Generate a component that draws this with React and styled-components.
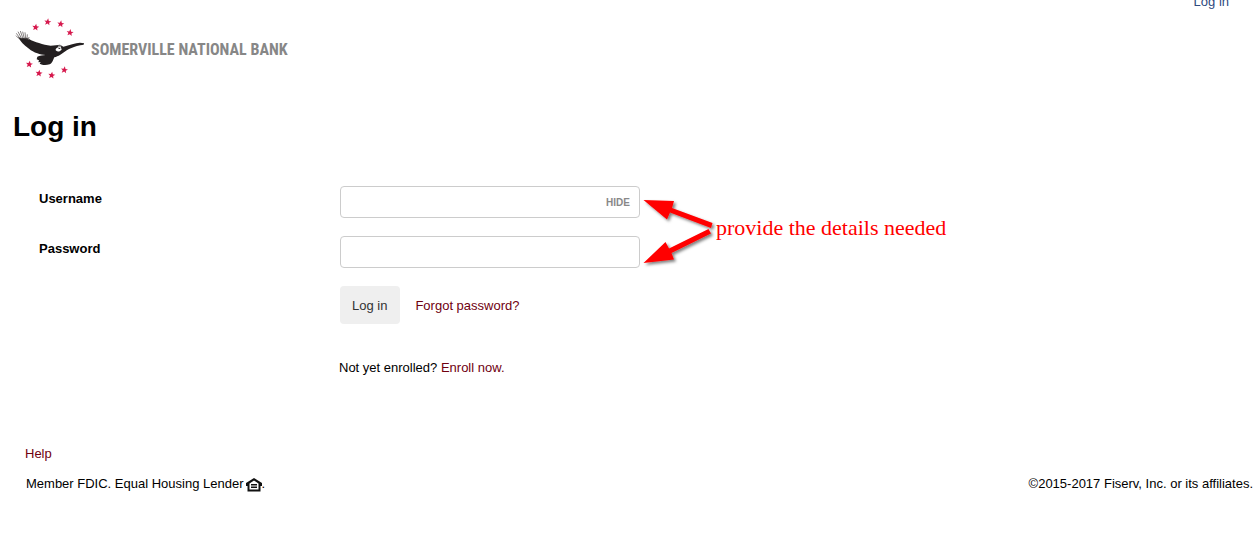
import { useState } from "react";
import styled, { createGlobalStyle } from "styled-components";

const GlobalStyle = createGlobalStyle`
  * {
    box-sizing: border-box;
  }

  body {
    margin: 0;
    background-color: #fff;
    color: #000;
    font-family: "Liberation Sans", Arial, sans-serif;
    font-size: 13px;
    line-height: 16px;
  }
`;

const Page = styled.div`
  width: 100%;
`;

const TopBar = styled.nav`
  display: flex;
  justify-content: flex-end;
  align-items: flex-end;
  height: 10px;
  padding-right: 27px;
`;

const StyledLink = styled.a`
  color: ${(props) => props.$color || "#700010"};
  text-decoration: none;
`;

const Brand = styled.header`
  display: flex;
  align-items: center;
  gap: 1px;
  padding: 2px 10px 0;
`;

const BrandName = styled.span`
  padding-top: 4px;
  color: #878787;
  font-family: "Liberation Sans Narrow", "Roboto Condensed", "Liberation Sans", sans-serif;
  font-size: 16px;
  font-weight: bold;
  line-height: 24px;
  white-space: nowrap;
`;

const Title = styled.h1`
  margin: 27px 13px 43px;
  font-size: 28px;
  font-weight: bold;
  line-height: 32px;
`;

const LoginForm = styled.form`
  position: relative;
  display: flex;
  flex-direction: column;
  gap: 18px;
  padding-left: 39px;
`;

const Row = styled.div`
  display: grid;
  grid-template-columns: 301px 300px;
`;

const Label = styled.label`
  font-weight: bold;
  line-height: 26px;
`;

const Field = styled.div`
  display: flex;
  align-items: center;
  height: 32px;
  border: 1px solid #ccc;
  border-radius: 4px;
`;

const Input = styled.input`
  flex: 1;
  min-width: 0;
  height: 100%;
  padding: 0 9px;
  border: none;
  outline: none;
  background: transparent;
  font: inherit;
`;

const HideButton = styled.button`
  padding: 0 9px;
  border: none;
  background: transparent;
  color: #888;
  font-family: inherit;
  font-size: 10px;
  font-weight: bold;
`;

const Actions = styled.div`
  grid-column: 2;
  display: flex;
  align-items: center;
  gap: 15px;
`;

const SubmitButton = styled.button`
  height: 38px;
  padding: 2px 13px 0 12px;
  border: none;
  border-radius: 4px;
  background-color: #efefef;
  color: #333;
  font: inherit;
`;

const ForgotLink = styled(StyledLink)`
  padding-top: 2px;
`;

const Enroll = styled.p`
  margin: 36px 0 0 339px;
`;

const Annotation = styled.div`
  position: absolute;
  top: 8px;
  left: 640px;
  display: flex;
  color: #f00;
  font-family: "Liberation Serif", "Times New Roman", serif;
  font-size: 22px;
  line-height: 26px;
  white-space: nowrap;
  pointer-events: none;
`;

const AnnotationText = styled.span`
  padding-top: 21px;
`;

const FooterContainer = styled.footer`
  margin-top: 70px;
  padding: 0 3px 32px 25px;
`;

const FooterRow = styled.div`
  display: flex;
  justify-content: space-between;
  margin-top: 14px;
  padding-left: 1px;
`;

const Lender = styled.span`
  display: flex;
  align-items: center;
`;

const HouseSvg = styled.svg`
  margin: 2px 0 0 2px;
`;

const STARS = [
  [77, 46],
  [113, 30],
  [152, 36],
  [180, 62],
  [58, 157],
  [87, 184],
  [125, 190],
  [163, 174],
];

function Star({ x, y }) {
  return (
    <path
      transform={`translate(${x} ${y}) rotate(8)`}
      d="M0-11 3-3.4 10.5-3.2 4.6 1.6 6.6 9 0 4.8-6.6 9-4.6 1.6-10.5-3.2-3-3.4Z"
      fill="#d6194d"
    />
  );
}

function EagleLogo() {
  return (
    <svg width="80" height="72" viewBox="0 0 240 216" aria-hidden="true">
      {STARS.map(([x, y]) => (
        <Star key={`${x}-${y}`} x={x} y={y} />
      ))}
      <path
        d="M24 75L34 78L50 77L56 80C66 86 76 90 87 93C99 97 110 100 122 101L138 100L150 98L160 104C178 99 196 93 210 92L222 94C224 98 219 100 211 100C196 103 187 107 177 111C168 116 160 123 151 128C144 132 139 134 133 136C129 143 128 153 119 157C109 160 97 160 89 155L92 150L85 151L87 145L80 142L82 134C89 130 98 130 107 129C98 129 90 127 82 124C72 120 64 116 57 110C47 103 37 96 24 75Z"
        fill="#231f20"
      />
      <path
        d="M27 80L18 71M30 79L19 64M35 80L24 59M39 80L31 57M43 80L38 59M47 80L45 61M51 82L52 67M55 84L57 75"
        stroke="#6d6867"
        strokeWidth="2.500"
        fill="none"
      />
      <path d="M137 112C139 106 147 103 153 106L155 113L149 118C142 120 136 117 137 112Z" fill="#fff" />
      <path d="M143 101L152 100L154 104L145 105Z" fill="#aaa" />
      <path d="M146 107L152 108L149 111L145 110Z" fill="#231f20" />
    </svg>
  );
}

function Arrows() {
  return (
    <svg width="76" height="76" viewBox="640 194 76 76" aria-hidden="true">
      <defs>
        <filter id="arrowShadow" x="-20%" y="-20%" width="150%" height="150%">
          <feDropShadow dx="2" dy="2" stdDeviation="1.5" floodColor="#000" floodOpacity="0.5" />
        </filter>
      </defs>
      <g fill="#f00" filter="url(#arrowShadow)">
        <path d="M643.5 200L674 201L672 208L712.500 223L711 228L670 212.500L667 219.500Z" />
        <path d="M643.500 263L665.500 242L669 248.500L708.500 229L711 233.500L671.500 253L674 259.500Z" />
      </g>
    </svg>
  );
}

function HouseIcon() {
  return (
    <HouseSvg width="16" height="14" viewBox="0 0 16 14" role="img" aria-label="Equal Housing Lender">
      <path d="M8 0L16 5V8H14.500V13.500H1.500V8H0V5ZM8 2.600L3.500 5.600V11.500H12.500V5.600Z" fill="#111" fillRule="evenodd" />
      <path d="M5 6H11V7.500H5ZM5 8.500H11V10H5Z" fill="#111" />
    </HouseSvg>
  );
}

function App() {
  const [hidden, setHidden] = useState(false);

  const toggleHidden = () => {
    setHidden(!hidden);
  };

  const submit = (e) => {
    e.preventDefault();
  };

  return (
    <Page>
      <GlobalStyle />
      <TopBar>
        <StyledLink href="#login" $color="#2f4a80">
          Log in
        </StyledLink>
      </TopBar>
      <Brand>
        <EagleLogo />
        <BrandName>SOMERVILLE NATIONAL BANK</BrandName>
      </Brand>
      <main>
        <Title>Log in</Title>
        <LoginForm onSubmit={submit}>
          <Row>
            <Label htmlFor="username">Username</Label>
            <Field>
              <Input id="username" type={hidden ? "password" : "text"} />
              <HideButton type="button" onClick={toggleHidden}>
                HIDE
              </HideButton>
            </Field>
          </Row>
          <Row>
            <Label htmlFor="password">Password</Label>
            <Field>
              <Input id="password" type="password" />
            </Field>
          </Row>
          <Row>
            <Actions>
              <SubmitButton type="submit">Log in</SubmitButton>
              <ForgotLink href="#forgot">Forgot password?</ForgotLink>
            </Actions>
          </Row>
          <Annotation>
            <Arrows />
            <AnnotationText>provide the details needed</AnnotationText>
          </Annotation>
        </LoginForm>
        <Enroll>
          Not yet enrolled? <StyledLink href="#enroll">Enroll now.</StyledLink>
        </Enroll>
      </main>
      <FooterContainer>
        <StyledLink href="#help">Help</StyledLink>
        <FooterRow>
          <Lender>
            Member FDIC. Equal Housing Lender
            <HouseIcon />.
          </Lender>
          <span>©2015-2017 Fiserv, Inc. or its affiliates.</span>
        </FooterRow>
      </FooterContainer>
    </Page>
  );
}

export default App;
